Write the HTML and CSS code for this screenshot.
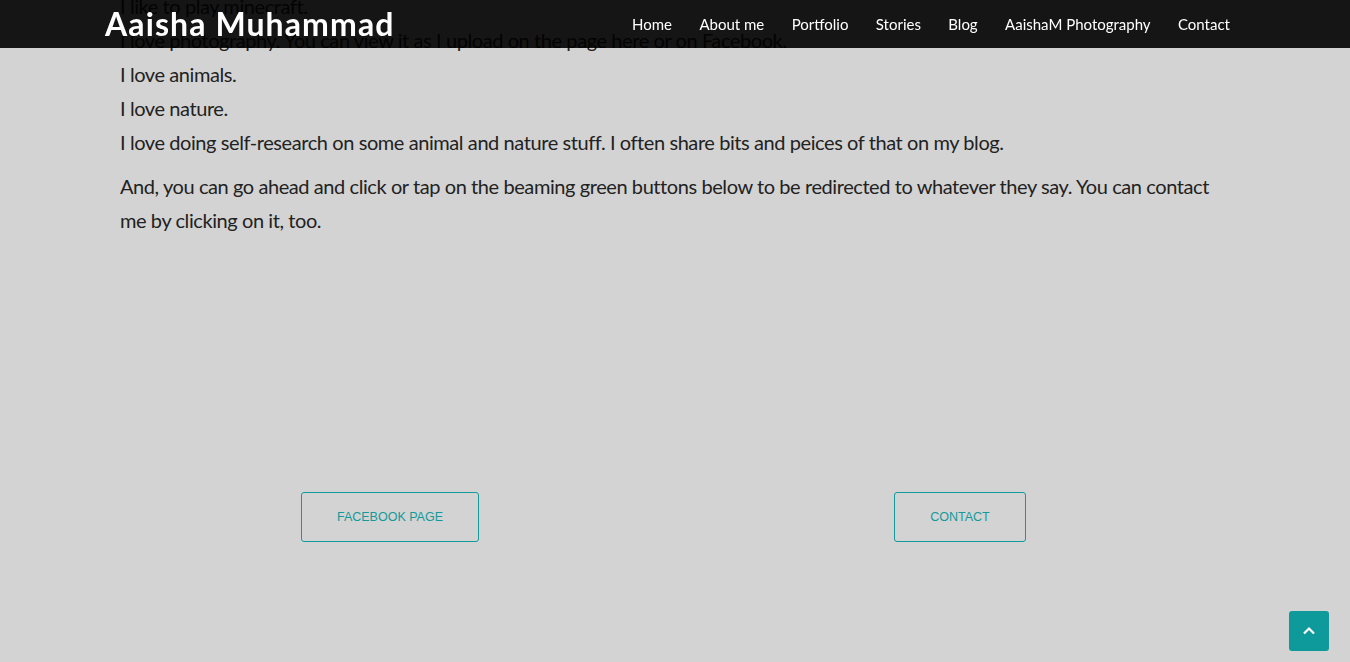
FILE: index.html
```html
<!DOCTYPE html>
<html lang="en">
<head>
<meta charset="utf-8">
<title>Aaisha Muhammad</title>
<link rel="stylesheet" href="styles.css">
</head>
<body>
<header class="topbar">
  <div class="topbar-inner">
    <a class="brand" href="#">Aaisha Muhammad</a>
    <nav class="nav">
      <a href="#">Home</a>
      <a href="#">About me</a>
      <a href="#">Portfolio</a>
      <a href="#">Stories</a>
      <a href="#">Blog</a>
      <a href="#">AaishaM Photography</a>
      <a href="#">Contact</a>
    </nav>
  </div>
</header>

<main class="content">
  <p class="lines">
    I like to play minecraft.<br>
    I love photography. You can view it as I upload on the page here or on Facebook.<br>
    I love animals.<br>
    I love nature.<br>
    I love doing self-research on some animal and nature stuff. I often share bits and peices of that on my blog.
  </p>
  <p class="lines">And, you can go ahead and click or tap on the beaming green buttons below to be redirected to whatever they say. You can contact me by clicking on it, too.</p>

  <div class="actions">
    <div class="col"><a class="btn" href="#">Facebook Page</a></div>
    <div class="col"><a class="btn" href="#">Contact</a></div>
  </div>
</main>

<a class="to-top" href="#" aria-label="Back to top">
  <svg width="14" height="10" viewBox="0 0 14 10"><path d="M2 7.5 L7 2.5 L12 7.5" fill="none" stroke="#fff" stroke-width="2.2"/></svg>
</a>
</body>
</html>
```

FILE: styles.css
```css
html, body {
  margin: 0;
  padding: 0;
}
body {
  background: #d3d3d3;
  color: #222;
  font-family: "Lato", "Liberation Sans", sans-serif;
  height: 662px;
  overflow: hidden;
}
.topbar {
  position: fixed;
  top: 0;
  left: 0;
  right: 0;
  height: 48px;
  background: rgba(0, 0, 0, 0.9);
  z-index: 10;
}
.topbar-inner {
  width: 1140px;
  margin: 0 auto;
  height: 48px;
  display: flex;
  align-items: center;
  justify-content: space-between;
}
.brand {
  color: #fff;
  text-decoration: none;
  font-family: "Lato", sans-serif;
  font-size: 32px;
  font-weight: 700;
  letter-spacing: 1.1px;
  margin-top: -1px;
}
.nav {
  display: flex;
  align-items: center;
}
.nav a {
  color: #fff;
  text-decoration: none;
  font-family: "Lato", sans-serif;
  font-size: 15px;
  padding: 0 13.7px;
}
.nav a:last-child {
  padding-right: 15px;
}
.content {
  width: 1110px;
  margin: -11px auto 0;
}
.lines {
  margin: 0 0 10px;
  font-size: 20px;
  line-height: 34px;
  letter-spacing: -0.42px;
}
.actions {
  display: grid;
  grid-template-columns: 1fr 1fr;
  margin: 255px -15px 0;
}
.col {
  display: flex;
  justify-content: center;
}
.btn {
  display: inline-block;
  border: 1px solid #139a9a;
  border-radius: 3px;
  color: #139a9a;
  text-decoration: none;
  text-transform: uppercase;
  font-family: "Liberation Sans", sans-serif;
  font-size: 12.5px;
  line-height: 48px;
  padding: 0 34.8px;
}
.to-top {
  position: fixed;
  right: 21px;
  bottom: 11px;
  width: 40px;
  height: 40px;
  border-radius: 3px;
  background: #0e9a9b;
  display: flex;
  align-items: center;
  justify-content: center;
}
```
